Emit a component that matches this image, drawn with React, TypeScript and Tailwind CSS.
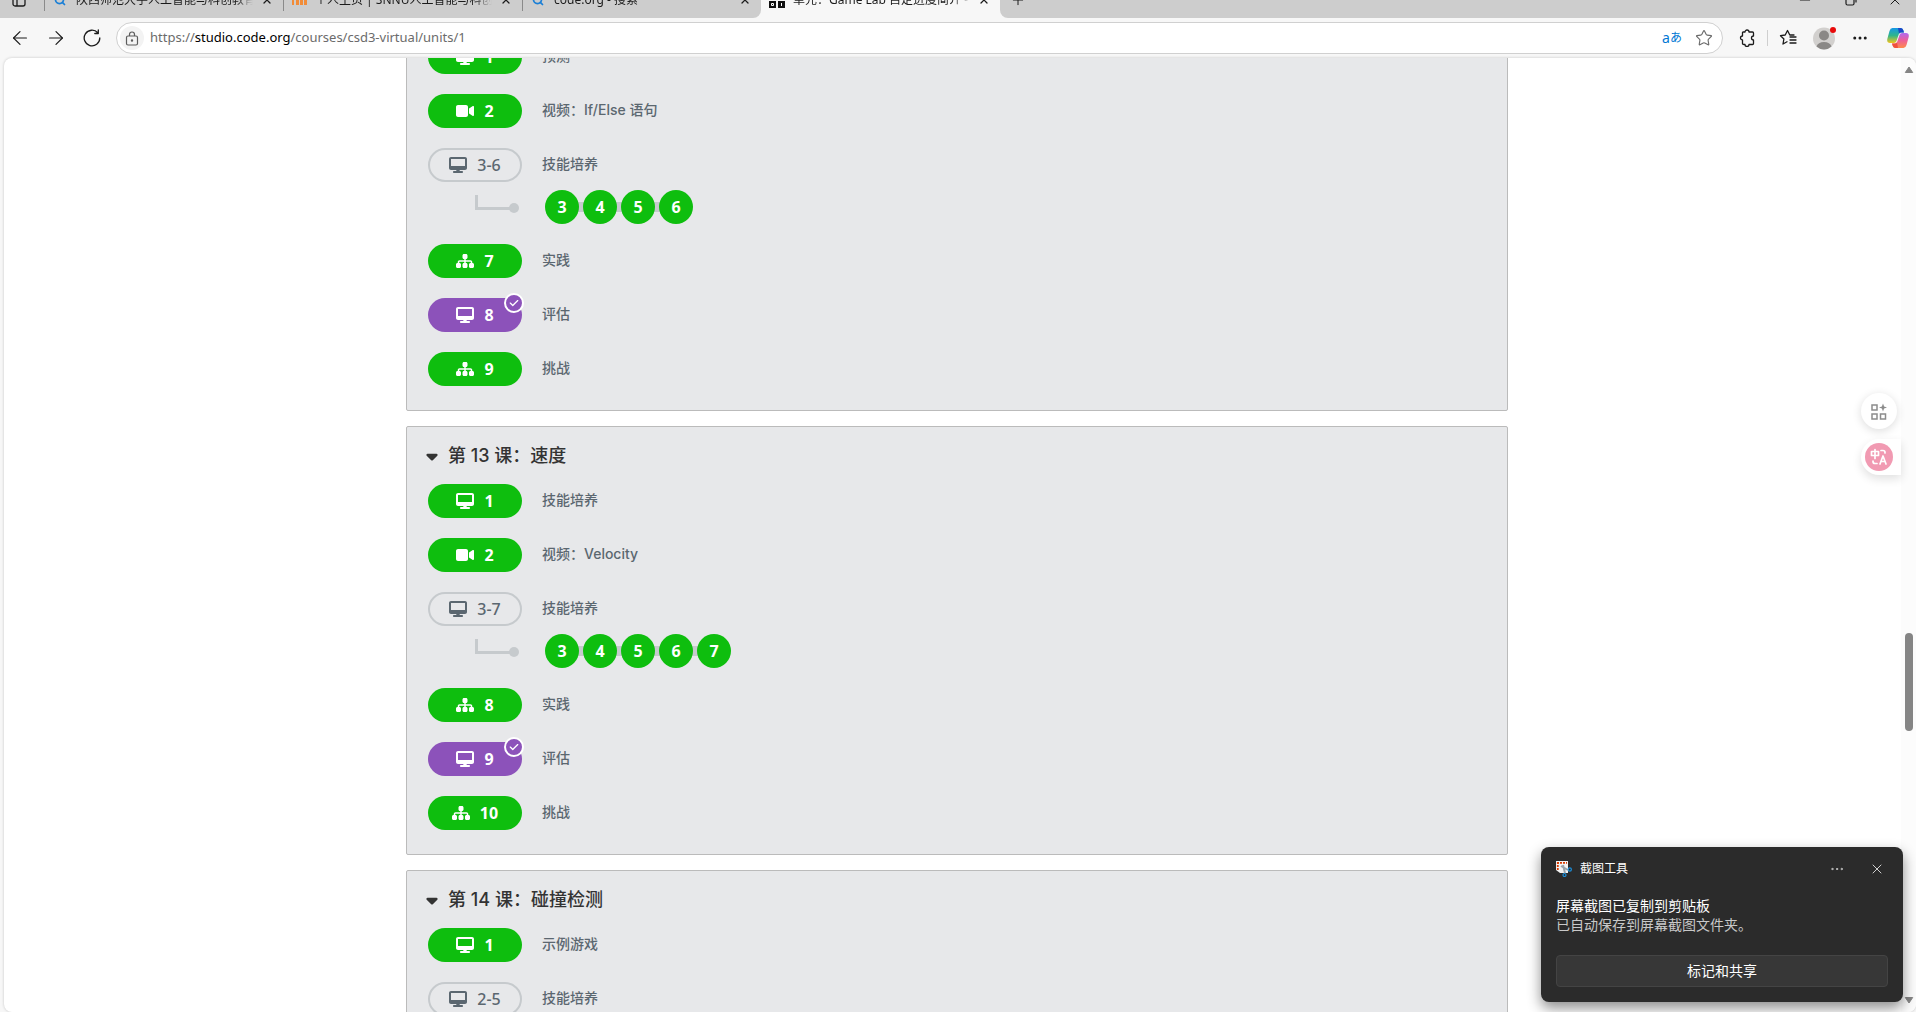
import React from 'react';
import { FaCaretDown, FaCheck, FaDesktop, FaSitemap, FaVideo } from 'react-icons/fa6';
import { ArrowLeft, ArrowRight, Ellipsis, Minus, Plus, Search, Star, X } from 'lucide-react';

type LevelKind = 'desktop' | 'video' | 'sitemap';

interface Level {
  kind: LevelKind;
  label: string;
  title: string;
  assessment?: boolean;
  steps?: number[];
  open?: boolean; // 进度组使用空心样式
}

interface Lesson {
  title?: string;
  levels: Level[];
}

const lessons: Lesson[] = [
  {
    levels: [
      { kind: 'desktop', label: '1', title: '预测' },
      { kind: 'video', label: '2', title: '视频：If/Else 语句' },
      { kind: 'desktop', label: '3-6', title: '技能培养', open: true, steps: [3, 4, 5, 6] },
      { kind: 'sitemap', label: '7', title: '实践' },
      { kind: 'desktop', label: '8', title: '评估', assessment: true },
      { kind: 'sitemap', label: '9', title: '挑战' },
    ],
  },
  {
    title: '第 13 课：速度',
    levels: [
      { kind: 'desktop', label: '1', title: '技能培养' },
      { kind: 'video', label: '2', title: '视频：Velocity' },
      { kind: 'desktop', label: '3-7', title: '技能培养', open: true, steps: [3, 4, 5, 6, 7] },
      { kind: 'sitemap', label: '8', title: '实践' },
      { kind: 'desktop', label: '9', title: '评估', assessment: true },
      { kind: 'sitemap', label: '10', title: '挑战' },
    ],
  },
  {
    title: '第 14 课：碰撞检测',
    levels: [
      { kind: 'desktop', label: '1', title: '示例游戏' },
      { kind: 'desktop', label: '2-5', title: '技能培养', open: true },
    ],
  },
];

const icons = { desktop: FaDesktop, video: FaVideo, sitemap: FaSitemap };

const LevelPill: React.FC<{ level: Level }> = ({ level }) => {
  const Icon = icons[level.kind];
  const look = level.open
    ? 'border-2 border-[#c6cacd] text-[#5b6770] font-medium'
    : level.assessment
      ? 'bg-[#8c52ba] text-white font-bold'
      : 'bg-[#0ebe0e] text-white font-bold';
  return (
    <a
      href="#"
      className={`relative flex h-[34px] w-[94px] shrink-0 items-center justify-center gap-2.5 rounded-full font-['Noto_Sans',sans-serif] text-base ${look}`}
    >
      <Icon className="h-4 w-[18px]" />
      <span>{level.label}</span>
      {level.assessment && (
        <span className="absolute -top-[5px] -right-0.5 flex size-5 items-center justify-center rounded-full border-2 border-white bg-[#8c52ba]">
          <FaCheck className="size-2.5" />
        </span>
      )}
    </a>
  );
};

const Steps: React.FC<{ steps: number[] }> = ({ steps }) => (
  <div className="mt-2 flex items-center">
    <svg width="94" height="34" viewBox="0 0 94 34" fill="none" className="mr-[23px] shrink-0">
      <path d="M48.5 5v13.5H86" stroke="#c6cacd" strokeWidth="3" />
      <circle cx="86" cy="18" r="5" fill="#c6cacd" />
    </svg>
    {steps.map((n, i) => (
      <React.Fragment key={n}>
        {i > 0 && <span className="-mx-px h-2.5 w-1.5 bg-[#c6cacd]" />}
        <a
          href="#"
          className="relative flex size-[34px] items-center justify-center rounded-full bg-[#0ebe0e] font-['Noto_Sans',sans-serif] text-base font-bold text-white"
        >
          {n}
        </a>
      </React.Fragment>
    ))}
  </div>
);

const LessonPanel: React.FC<{ lesson: Lesson }> = ({ lesson }) => (
  <section className="rounded-xs border border-[#bbb] bg-[#e7e8ea] px-[21px] pb-6">
    {lesson.title && (
      <h2 className="-ml-0.5 mb-4 flex h-6 items-center gap-2.5 text-lg font-medium text-[#333] mt-[17px]">
        <FaCaretDown className="h-[18px] w-3" />
        {lesson.title}
      </h2>
    )}
    <div className="flex flex-col gap-5">
      {lesson.levels.map((level) => (
        <div key={level.label}>
          <div className="flex items-center gap-5">
            <LevelPill level={level} />
            <span className="pb-0.5 text-sm font-medium text-[#5b6770]">{level.title}</span>
          </div>
          {level.steps && <Steps steps={level.steps} />}
        </div>
      ))}
    </div>
  </section>
);

const OrangeBars = () => (
  <svg viewBox="0 0 16 16" className="size-4 shrink-0">
    <path d="M1 4h2v9H1zM5 3h3v10H5zM9 3h3v10H9zM13 4h3v9h-3z" fill="#f28c38" />
  </svg>
);

const CodeTiles = () => (
  <svg viewBox="0 0 16 16" className="size-4 shrink-0">
    <path d="M0 0h7v7H0zM9 0h7v7H9zM0 9h7v7H0zM9 9h7v7H9z" fill="#111" />
    <path d="M2.500 11.500h2v2h-2zM12.500 11v3" fill="none" stroke="#fff" />
  </svg>
);

const Tab: React.FC<{ icon: React.ReactNode; title: string; active?: boolean }> = ({ icon, title, active }) => (
  <div className="flex h-9 w-[239px] items-center">
    <span className={active ? 'w-px' : 'h-[22px] w-px bg-[#8a8a8a]'} />
    <div className="flex min-w-0 flex-1 items-center gap-2 pr-2.5 pl-[7px]">
      {icon}
      <span className="min-w-0 flex-1 overflow-hidden text-xs whitespace-nowrap text-[#1b1b1b] [mask-image:linear-gradient(to_right,#000_90%,transparent)]">
        {title}
      </span>
      <button aria-label="关闭标签页">
        <X className="size-3" strokeWidth={2.5} />
      </button>
    </div>
  </div>
);

const searchIcon = <Search className="size-4 shrink-0 p-0.5 text-[#1a7fd6]" strokeWidth={3.5} />;

const TabStrip = () => (
  <div className="flex h-[18px] shrink-0 overflow-hidden bg-[#f7f7f7] font-['Noto_Sans','Noto_Sans_CJK_SC',sans-serif] text-[#1b1b1b]">
    <div className="flex h-[18px] rounded-br-lg bg-[#cdcdcd]">
      <div className="-mt-[18px] flex h-9 items-center">
        <button aria-label="标签操作" className="flex w-11 justify-center pr-1.5">
          <svg width="14" height="14" viewBox="0 0 14 14" fill="none" stroke="currentColor" strokeWidth="1.3">
            <rect x="1" y="1" width="12" height="12" rx="2" />
            <path d="M5 4v9M1 4h12" />
          </svg>
        </button>
        <Tab icon={searchIcon} title="陕西师范大学人工智能与科创教育中心" />
        <Tab icon={<OrangeBars />} title="个人主页 | SNNU人工智能与科创教育" />
        <Tab icon={searchIcon} title="code.org - 搜索" />
      </div>
    </div>
    <div className="-mt-[18px]">
      <Tab icon={<CodeTiles />} title="单元：Game Lab 自定进度简介 - Code.org" active />
    </div>
    <div className="flex h-[18px] flex-1 rounded-bl-lg bg-[#cdcdcd]">
      <div className="-mt-[18px] flex h-9 flex-1 items-center">
        <button aria-label="新建标签页" className="flex w-9 justify-center">
          <Plus className="size-4" strokeWidth={1.5} />
        </button>
        <div className="ml-auto flex items-center">
          <button aria-label="最小化" className="flex w-[46px] justify-center">
            <Minus className="size-4" strokeWidth={1.5} />
          </button>
          <button aria-label="还原" className="flex w-[46px] justify-center">
            <svg width="12" height="12" viewBox="0 0 12 12" fill="none" stroke="currentColor" strokeWidth="1.2">
              <rect x="1" y="3" width="8" height="8" rx="1.5" />
              <path d="M3.5 1H9q2 0 2 2v5.500" />
            </svg>
          </button>
          <button aria-label="关闭" className="flex w-[42px] justify-center">
            <X className="size-4" strokeWidth={1.5} />
          </button>
        </div>
      </div>
    </div>
  </div>
);

const Copilot = () => (
  <svg width="22" height="22" viewBox="0 0 22 22">
    <defs>
      <linearGradient id="cpLeft" x1="0" y1="0" x2="0" y2="1">
        <stop offset="0" stopColor="#1597e8" />
        <stop offset="0.5" stopColor="#2fb58b" />
        <stop offset="1" stopColor="#f2c51c" />
      </linearGradient>
      <linearGradient id="cpRight" x1="0" y1="0" x2="0" y2="1">
        <stop offset="0" stopColor="#b06af0" />
        <stop offset="0.5" stopColor="#ee5f97" />
        <stop offset="1" stopColor="#ff8a4a" />
      </linearGradient>
    </defs>
    <path d="M5.500 1h8q2 0 2.700 2l.8 2.500h-3q-1.700 0-2.200 1.700L9.500 14q-.6 2-2.500 2H3q-3.400 0-2.700-4L2.500 4Q3.300 1 5.500 1z" fill="url(#cpLeft)" />
    <path d="M11 1h2.500q2 0 2.700 2l.8 2.500h-3q-1.500 0-2 1.200z" fill="#1b48c7" />
    <path d="M16.500 21h-8q-2 0-2.700-2L5 16.500h3q1.700 0 2.200-1.700L12.500 8q.6-2 2.500-2h4q3.400 0 2.700 4L19.500 18q-.8 3-3 3z" fill="url(#cpRight)" />
    <path d="M11 21H8.500q-2 0-2.700-2L5 16.500h3q1.500 0 2-1.200z" fill="#f0503c" />
  </svg>
);

const Toolbar = () => (
  <div className="flex h-10 shrink-0 items-center bg-[#f7f7f7] pl-[2px] text-[#1b1b1b]">
    <button aria-label="后退" className="flex w-9 justify-center">
      <ArrowLeft className="size-[22px]" strokeWidth={1.3} />
    </button>
    <button aria-label="前进" className="flex w-9 justify-center">
      <ArrowRight className="size-[22px]" strokeWidth={1.3} />
    </button>
    <button aria-label="刷新" className="flex w-9 justify-center">
      <svg width="18" height="18" viewBox="0 0 18 18" fill="none" stroke="currentColor" strokeWidth="1.3" strokeLinecap="round" strokeLinejoin="round">
        <path d="M16.800 9A7.800 7.800 0 1 1 14.800 3.800M15.300 1v3.500h-3.500" />
      </svg>
    </button>
    <div className="ml-1.5 flex h-8 flex-1 items-center rounded-full border border-[#d0d0d0] bg-white pr-0.5 pl-[3px]">
      <span className="flex size-6 items-center justify-center rounded-full bg-[#f3f3f3] text-[#5c5c5c]">
        <svg width="14" height="15" viewBox="0 0 14 15" fill="none" stroke="currentColor" strokeWidth="1.2">
          <rect x="1.500" y="5" width="11" height="9" rx="1.500" />
          <path d="M4.500 5V3.500a2.500 2.500 0 0 1 5 0V5" />
          <circle cx="7" cy="9.500" r=".6" fill="currentColor" />
        </svg>
      </span>
      <div className="ml-1.5 flex-1 font-['Noto_Sans',sans-serif] text-[13px] text-[#6b6b6b]">
        https://<span className="text-black">studio.code.org</span>/courses/csd3-virtual/units/1
      </div>
      <button aria-label="翻译" className="flex w-8 justify-center font-['Noto_Sans','Noto_Sans_CJK_JP',sans-serif] text-sm leading-4 text-[#0078d4]">
        a<span className="text-xs leading-4">あ</span>
      </button>
      <button aria-label="收藏" className="flex w-8 justify-center text-[#6b6b6b]">
        <Star className="size-[18px]" strokeWidth={1.5} />
      </button>
    </div>
    <div className="flex items-center">
      <button aria-label="扩展" className="flex w-12 justify-center">
        <svg width="16" height="18" viewBox="0 0 16 18" fill="none" stroke="currentColor" strokeWidth="1.3" strokeLinejoin="round">
          <path d="M4 3h2a2 2 0 0 1 4 0h3.500q1 0 1 1v3a2 2 0 0 0 0 4v3.500q0 1-1 1H10a2 2 0 0 1-4 0H5q-1.500 0-1.500-1V11a2 2 0 0 1 0-4V3.500z" />
        </svg>
      </button>
      <span className="-ml-1 h-4 w-px bg-[#cfcfcf]" />
      <button aria-label="收藏夹" className="flex w-10 justify-center">
        <svg width="18" height="18" viewBox="0 0 18 18" fill="none" stroke="currentColor" strokeWidth="1.3" strokeLinecap="round" strokeLinejoin="round">
          <path d="M15 6h-4.200L8.500 1.500 6.200 6l-4.700.7L4.900 10 4 15l4-2.200M11 8h6M11 11h6M11 14h6" />
        </svg>
      </button>
      <button aria-label="个人资料" className="flex w-8 justify-center">
        <svg width="24" height="24" viewBox="0 0 24 24">
          <circle cx="12" cy="12.500" r="11" fill="#d2d0ce" />
          <circle cx="12" cy="9.500" r="5" fill="#8a8886" />
          <path d="M4.500 20.500q1.500-4.500 7.500-4.500t7.500 4.500a11 11 0 0 1-15 0z" fill="#8a8886" />
          <circle cx="21" cy="4" r="3" fill="#e80a0a" />
        </svg>
      </button>
      <button aria-label="设置及其他" className="flex w-10 justify-center">
        <Ellipsis className="size-[18px]" strokeWidth={2} />
      </button>
      <button aria-label="Copilot" className="flex w-9 justify-center">
        <Copilot />
      </button>
    </div>
  </div>
);

const ScrollBar = () => (
  <div className="flex w-[15px] shrink-0 flex-col items-center bg-[#fcfcfc] py-2">
    <svg width="10" height="8" viewBox="0 0 10 8">
      <path d="M5 1l3.700 5.500H1.300z" fill="#858585" stroke="#858585" strokeLinejoin="round" />
    </svg>
    <span className="grow-[559]" />
    <span className="h-[98px] w-2 rounded-full bg-[#858585]" />
    <span className="grow-[265]" />
    <svg width="10" height="8" viewBox="0 0 10 8">
      <path d="M5 7l3.700-5.500H1.300z" fill="#858585" stroke="#858585" strokeLinejoin="round" />
    </svg>
  </div>
);

const SideTools = () => (
  <div className="absolute top-[335px] right-[15px] flex flex-col gap-2.5">
    <button aria-label="工具" className="flex size-9 items-center justify-center rounded-full bg-white shadow-[0_2px_10px_rgba(0,0,0,0.14)]">
      <svg width="16" height="17" viewBox="0 0 16 17" fill="none" stroke="#8c8c8c" strokeWidth="1.500">
        <rect x="1" y="2" width="5" height="5" />
        <rect x="1" y="11" width="5" height="5" />
        <rect x="9.500" y="11" width="5" height="5" />
        <path d="M12 .5l1.100 2.900L16 4.500l-2.900 1.100L12 8.500l-1.100-2.900L8 4.500l2.900-1.100z" fill="#8c8c8c" stroke="none" />
      </svg>
    </button>
    <button aria-label="翻译此页" className="flex h-9 w-10 items-center rounded-l-full bg-white pl-1 shadow-[0_4px_10px_rgba(0,0,0,0.12)]">
      <svg width="28" height="28" viewBox="0 0 28 28" fill="none" stroke="#fff" strokeWidth="1.700" strokeLinecap="round" strokeLinejoin="round">
        <circle cx="14" cy="14" r="14" fill="#f19ab2" stroke="none" />
        <path d="M6.500 8.500h7v4h-7zM10 6.500v9M16 7.500h2q2 0 2 2v.5M8 18v.5q0 2 2 2h2M15 21l3-8 3 8M16 18.500h4" />
      </svg>
    </button>
  </div>
);

const Toast = () => (
  <div className="absolute right-[13px] bottom-2.5 w-[362px] rounded-lg bg-[#2b2b2b] px-[15px] pt-3.5 pb-[15px] font-['Noto_Sans_CJK_SC',sans-serif] text-white shadow-[0_6px_14px_rgba(0,0,0,0.45)]">
    <div className="mb-[19px] flex h-4 items-center">
      <svg width="16" height="16" viewBox="0 0 16 16">
        <path d="M0 0h12v12H4L0 9z" fill="#f3f3f3" />
        <path d="M1 1.800h10M1.800 1v8" stroke="#d83b01" strokeWidth="1.800" strokeDasharray="2 1" />
        <path d="M5 5l7 4M7 4l2 8" stroke="#9aa3aa" strokeWidth="2" />
        <circle cx="13.800" cy="8.500" r="1.600" fill="none" stroke="#1a8fdc" strokeWidth="1.200" />
        <circle cx="8.500" cy="14" r="1.500" fill="none" stroke="#1a8fdc" strokeWidth="1.200" />
      </svg>
      <span className="ml-2 pb-0.5 text-xs">截图工具</span>
      <button aria-label="更多" className="ml-auto flex w-10 justify-center text-[#c8c8c8]">
        <Ellipsis className="size-4" strokeWidth={1.5} />
      </button>
      <button aria-label="关闭通知" className="-mr-1 ml-[5px] flex w-[30px] justify-center text-[#d0d0d0]">
        <X className="size-4" strokeWidth={1.5} />
      </button>
    </div>
    <p className="text-sm leading-[19px]">屏幕截图已复制到剪贴板</p>
    <p className="text-sm leading-[19px] text-[#c8c8c8]">已自动保存到屏幕截图文件夹。</p>
    <button className="mt-[21px] h-8 w-full rounded border border-[#444] bg-[#373737] pb-0.5 text-sm">标记和共享</button>
  </div>
);

const App: React.FC = () => {
  return (
    <div className="relative flex h-screen flex-col overflow-hidden bg-[#f7f7f7] font-['Inter','Noto_Sans_CJK_SC',sans-serif]">
      <TabStrip />
      <Toolbar />
      <div className="relative ml-1 flex min-h-0 flex-1 overflow-hidden rounded-lg bg-white shadow-[0_0_3px_rgba(0,0,0,0.2)]">
        <main className="min-w-0 flex-1 overflow-hidden pl-[9px]">
          <div className="mx-auto -mt-[19px] flex max-w-[1102px] flex-col gap-[15px]">
            {lessons.map((lesson, i) => (
              <LessonPanel key={i} lesson={lesson} />
            ))}
          </div>
        </main>
        <ScrollBar />
        <SideTools />
      </div>
      <Toast />
    </div>
  );
};

export default App;
